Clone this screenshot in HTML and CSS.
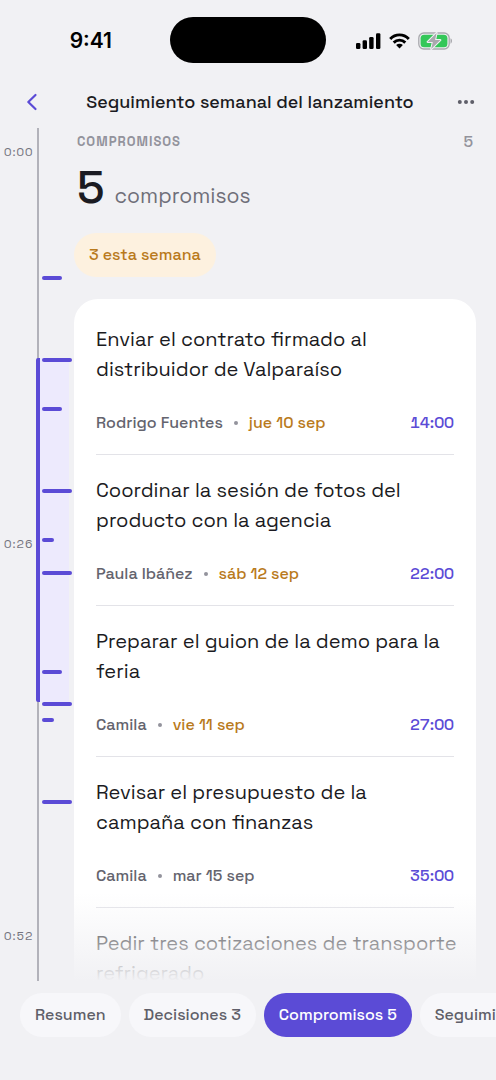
FILE: index.html
```html
<!DOCTYPE html>
<html lang="es">
<head>
<meta charset="utf-8">
<meta name="viewport" content="width=device-width, initial-scale=1">
<title>Seguimiento semanal del lanzamiento</title>
<link rel="stylesheet" href="styles.css">
</head>
<body>
<div class="app">
  <div class="status">
    <span class="clock">9:41</span>
    <span class="island"></span>
    <span class="status-icons">
      <svg width="25" height="16" viewBox="0 0 25 16"><g fill="#000"><rect x="0" y="10" width="4.4" height="6" rx="1.3"/><rect x="6.6" y="7.2" width="4.4" height="8.8" rx="1.3"/><rect x="13.2" y="4" width="4.4" height="12" rx="1.3"/><rect x="20" y="0.3" width="4.4" height="15.7" rx="1.3"/></g></svg>
      <svg width="21" height="16" viewBox="0 0 21 16"><g fill="none" stroke="#000" stroke-width="2.9"><path d="M1.2 5.9C6.4.5 14.6.5 19.8 5.9"/><path d="M4.7 9.6c3.3-3.3 8.3-3.3 11.6 0"/></g><path d="M7.1 12.1c2-1.700 4.800-1.700 6.800 0L10.500 15.600z" fill="#000"/></svg>
      <svg width="35" height="18" viewBox="0 0 35 18"><rect x=".8" y="1" width="30.400" height="16" rx="5" fill="none" stroke="#a9a9ae" stroke-width="1.300"/><rect x="2.600" y="2.800" width="26.800" height="12.400" rx="3.500" fill="#34c759"/><path d="M32.500 6.300c2 .8 2 4.600 0 5.400z" fill="#a9a9ae"/><path d="M18.600 1 9.600 9.900h5.200L13.200 17l9.200-8.900h-5.300z" fill="#a9a9ae" stroke="#f1f1f4" stroke-width="2" stroke-linejoin="round" paint-order="stroke"/></svg>
    </span>
  </div>

  <header class="header">
    <button class="icon-button" type="button" aria-label="Atrás"><svg width="12" height="18" viewBox="0 0 12 18"><path d="M9.500 2 2.300 9l7.200 7" fill="none" stroke="#5b4bd6" stroke-width="2.200" stroke-linecap="round" stroke-linejoin="round"/></svg></button>
    <h1 class="title">Seguimiento semanal del lanzamiento</h1>
    <button class="icon-button more" type="button" aria-label="Más opciones"><svg width="18" height="6" viewBox="0 0 18 6"><g fill="#5f5f69"><circle cx="2.800" cy="3" r="2"/><circle cx="9" cy="3" r="2"/><circle cx="15.200" cy="3" r="2"/></g></svg></button>
  </header>

  <div class="body">
    <aside class="rail" aria-label="Línea de tiempo">
      <div class="labels"><span>0:00</span><span>0:26</span><span>0:52</span></div>
      <div class="track">
        <div class="axis">
          <span class="window" style="top:26.300%;height:43.800%"></span>
          <span class="tick medium" style="top:16.100%"></span>
          <span class="tick long" style="top:26.500%"></span>
          <span class="tick medium" style="top:32.800%"></span>
          <span class="tick long" style="top:43.200%"></span>
          <span class="tick short" style="top:49.500%"></span>
          <span class="tick long" style="top:53.700%"></span>
          <span class="tick medium" style="top:66.300%"></span>
          <span class="tick long" style="top:70.400%"></span>
          <span class="tick short" style="top:72.500%"></span>
          <span class="tick long" style="top:82.900%"></span>
        </div>
      </div>
    </aside>

    <main class="content">
      <div class="section-head"><h2 class="eyebrow">COMPROMISOS</h2><span class="section-count">5</span></div>
      <p class="summary"><strong class="total">5</strong><span class="unit">compromisos</span></p>
      <p class="badge">3 esta semana</p>
      <ul class="card">
        <li class="item">
          <p class="task">Enviar el contrato firmado al distribuidor de Valparaíso</p>
          <div class="meta"><span>Rodrigo Fuentes</span><span class="dot"></span><span class="soon">jue 10 sep</span><a class="time" href="#t14">14:00</a></div>
        </li>
        <li class="item">
          <p class="task">Coordinar la sesión de fotos del producto con la agencia</p>
          <div class="meta"><span>Paula Ibáñez</span><span class="dot"></span><span class="soon">sáb 12 sep</span><a class="time" href="#t22">22:00</a></div>
        </li>
        <li class="item">
          <p class="task">Preparar el guion de la demo para la feria</p>
          <div class="meta"><span>Camila</span><span class="dot"></span><span class="soon">vie 11 sep</span><a class="time" href="#t27">27:00</a></div>
        </li>
        <li class="item">
          <p class="task">Revisar el presupuesto de la campaña con finanzas</p>
          <div class="meta"><span>Camila</span><span class="dot"></span><span>mar 15 sep</span><a class="time" href="#t35">35:00</a></div>
        </li>
        <li class="item">
          <p class="task">Pedir tres cotizaciones de transporte refrigerado</p>
        </li>
      </ul>
    </main>
  </div>

  <nav class="tabs" aria-label="Secciones">
    <button class="tab" type="button">Resumen</button>
    <button class="tab" type="button">Decisiones 3</button>
    <button class="tab active" type="button" aria-current="true">Compromisos 5</button>
    <button class="tab" type="button">Seguimiento</button>
  </nav>
</div>
</body>
</html>
```
FILE: styles.css
```css
* { box-sizing: border-box; }
body, h1, h2, p, ul { margin: 0; padding: 0; }
body {
  background: #f1f1f4;
  color: #1b1b22;
  font-family: "Space Grotesk", Inter, "Liberation Sans", sans-serif;
}
button { border: 0; background: none; padding: 0; font: inherit; cursor: pointer; }
svg { display: block; }

.app { display: flex; flex-direction: column; height: 100vh; overflow: hidden; }

.status {
  display: grid;
  grid-template-columns: 1fr auto 1fr;
  align-items: center;
  height: 80px;
  flex: none;
}
.clock {
  justify-self: end;
  padding: 2px 58px 0 0;
  color: #000;
  font: 600 21px/28px Inter, sans-serif;
}
.island { width: 156px; height: 46px; border-radius: 23px; background: #000; }
.status-icons { display: flex; align-items: center; gap: 8px; padding: 1px 0 0 30px; }

.header {
  display: grid;
  grid-template-columns: 64px 1fr 64px;
  align-items: center;
  height: 48px;
  padding-bottom: 4px;
  flex: none;
}
.icon-button { display: grid; place-items: center; height: 44px; }
.more { justify-content: end; padding-right: 21px; }
.title { padding-left: 4px; text-align: center; font-size: 18px; line-height: 24px; font-weight: 500; white-space: nowrap; }

.body { display: grid; grid-template-columns: 74px 1fr; flex: 1; min-height: 0; }

.rail { display: grid; grid-template-columns: 37px 1fr; min-height: 0; }
.labels {
  display: flex;
  flex-direction: column;
  justify-content: space-between;
  padding: 16px 0 37px 4px;
  color: #74747e;
  font-size: 12px;
  line-height: 16px;
  letter-spacing: 1px;
  font-variant-numeric: tabular-nums;
}
.track { border-left: 2px solid #b2b2ba; padding: 24px 0 45px; }
.axis { position: relative; height: 100%; }
.window {
  position: absolute;
  left: -3px;
  width: 33px;
  border-left: 4px solid #5b4bd6;
  border-radius: 2px 0 0 2px;
  background: #edeafd;
}
.tick {
  position: absolute;
  left: 3px;
  height: 4px;
  margin-top: -2px;
  border-radius: 2px;
  background: #5b4bd6;
}
.short { width: 12px; }
.medium { width: 20px; }
.long { width: 30px; }

.content { position: relative; min-width: 0; overflow: hidden; padding-right: 20px; }
.content::after {
  content: "";
  position: absolute;
  inset: auto 0 0;
  height: 88px;
  background: linear-gradient(rgba(241, 241, 244, 0), #f1f1f4);
  pointer-events: none;
}
.section-head { display: flex; justify-content: space-between; align-items: center; padding: 2px 3px 0; color: #93939c; }
.eyebrow { font-size: 13px; line-height: 24px; font-weight: 600; letter-spacing: 1px; }
.section-count { font-size: 16px; line-height: 22px; font-weight: 500; }
.summary { display: flex; align-items: baseline; gap: 10px; padding: 5px 3px 0; line-height: 56px; }
.total { font-size: 46px; font-weight: 500; }
.unit { color: #6f6f79; font-size: 21px; }
.badge {
  width: fit-content;
  margin-top: 9px;
  padding: 0 15px;
  border-radius: 22px;
  background: #fdf1df;
  color: #b97a1c;
  font-size: 16px;
  line-height: 44px;
  font-weight: 500;
}
.card { margin-top: 22px; padding: 5px 22px; border-radius: 24px; background: #fff; list-style: none; }
.item { padding: 20px 0; border-bottom: 1px solid #e3e3e8; }
.item:last-child { border-bottom: 0; }
.task { margin-right: -4px; font-size: 20px; line-height: 30px; }
.meta {
  display: flex;
  align-items: center;
  margin-top: 28px;
  color: #64646e;
  font-size: 16px;
  line-height: 22px;
  font-weight: 500;
}
.dot { width: 4px; height: 4px; margin: 0 11px; border-radius: 2px; background: #93939c; }
.soon { color: #b97a1c; }
.time { margin-left: auto; color: #5b4bd6; text-decoration: none; font-variant-numeric: tabular-nums; }

.tabs { display: flex; gap: 8px; padding: 12px 20px 43px; overflow: hidden; flex: none; }
.tab {
  flex: none;
  padding: 0 15px;
  border-radius: 22px;
  background: #f7f7fa;
  color: #5f5f69;
  font-size: 16px;
  line-height: 44px;
  font-weight: 500;
}
.active { background: #5b4bd6; color: #fff; }
```
